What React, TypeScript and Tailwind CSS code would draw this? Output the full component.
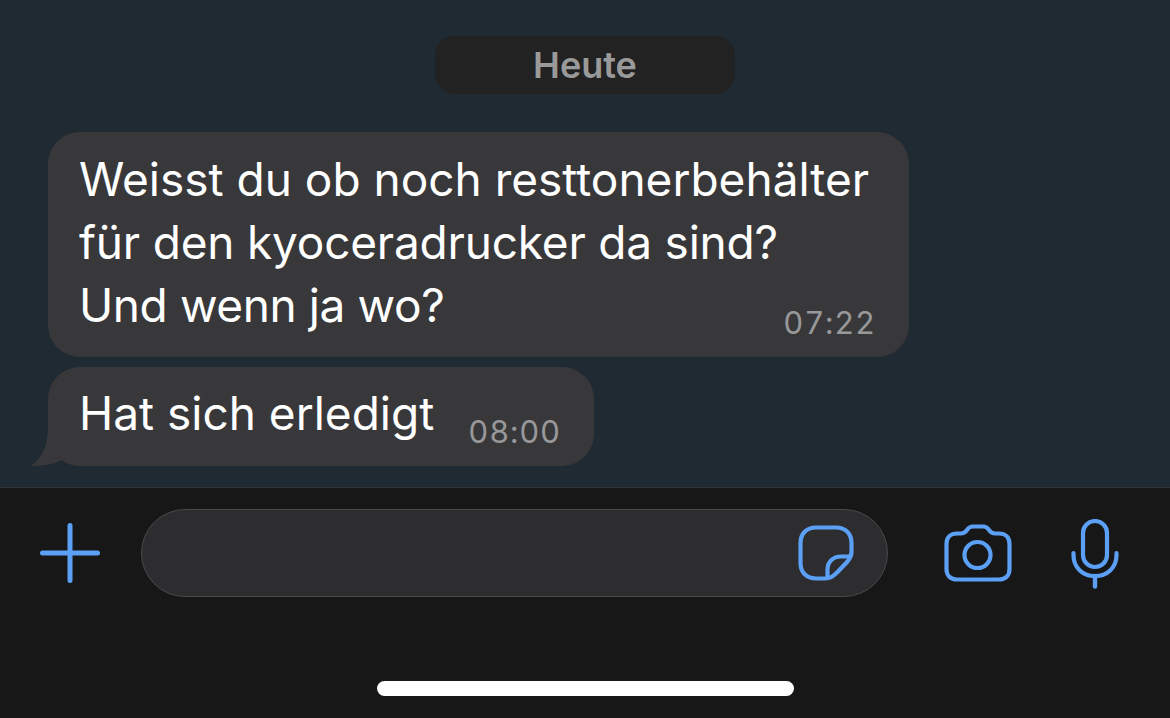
import React from "react";

const font = { fontFamily: "Inter, 'Noto Sans', sans-serif" };

const PlusIcon = () => (
	<svg width="60" height="60" viewBox="0 0 60 60" fill="none" stroke="#5ba0f5" strokeWidth="5" strokeLinecap="round">
		<path d="M30 2.5V57.5M2.5 30H57.5" />
	</svg>
);

const StickerIcon = () => (
	<svg width="56" height="56" viewBox="0 0 56 56" fill="none" stroke="#5ba0f5" strokeWidth="4.2" strokeLinejoin="round">
		<path d="M18 2.5H38C47.5 2.5 53.5 8.5 53.5 18V27C53.5 31 52 33.5 49.5 36.5L40 46.5C35.5 51 32.5 53.5 27 53.5H18C8.5 53.5 2.5 47.5 2.5 38V18C2.5 8.5 8.5 2.5 18 2.5Z" />
		<path d="M52 31.5H43C35 31.5 29.5 37 29.5 44.5V53.2" />
	</svg>
);

const CameraIcon = () => (
	<svg width="68" height="58" viewBox="0 0 68 58" fill="none" stroke="#5ba0f5" strokeWidth="4.2" strokeLinejoin="round">
		<path d="M13 9.5H17C20 9.5 21.5 8 23 6C24.5 3.5 26.5 2.5 29 2.5H39C41.5 2.5 43.5 3.5 45 6C46.5 8 48 9.5 51 9.5H55C61.5 9.5 65.5 13.5 65.5 20V45C65.5 51.5 61.5 55.5 55 55.5H13C6.5 55.5 2.5 51.5 2.5 45V20C2.5 13.5 6.5 9.5 13 9.5Z" />
		<circle cx="33.5" cy="31" r="13" />
	</svg>
);

const MicIcon = () => (
	<svg width="48" height="70" viewBox="0 0 48 70" fill="none" stroke="#5ba0f5" strokeLinecap="round">
		<rect x="12" y="2" width="24" height="46" rx="12" strokeWidth="4.2" />
		<path d="M2.5 34V36C2.5 48.5 11.5 57 24 57C36.5 57 45.5 48.5 45.5 36V34" strokeWidth="4.2" />
		<path d="M24 57V67.5" strokeWidth="4.4" />
	</svg>
);

const BubbleTail = () => (
	<svg className="absolute bottom-0 left-[-17px]" width="50" height="40" viewBox="0 0 50 40" fill="#38383a">
		<path d="M17 0C17 18 13 30 0 40C12 40 25 38 32 33C36 38 42 40 50 40V0Z" />
	</svg>
);

export default function App() {
	return (
		<div className="flex h-[718px] w-[1170px] flex-col overflow-hidden bg-[#171718]" style={font}>
			{/* chat area */}
			<div className="flex h-[488px] flex-col border-b border-[#333436] bg-[#1f2a33] pl-12 pt-9">
				<div className="-ml-12 flex h-[58px] w-[300px] items-center justify-center self-center rounded-[20px] bg-[#222222] text-[36px] font-semibold text-[#9a9a9a]">
					Heute
				</div>

				<div className="mt-[38px] flex h-[225px] w-[861px] items-end justify-between rounded-[32px] bg-[#38383a] pb-[15px] pl-[31px] pr-[33px]">
					<p className="mt-[10px] w-[700px] self-center whitespace-nowrap text-[46px] leading-[63px] text-white">
						<span className="block">Weisst du ob noch resttonerbehälter</span>
						<span className="block tracking-[-0.2px]">für den kyoceradrucker da sind?</span>
						<span className="block tracking-[-0.4px]">Und wenn ja wo?</span>
					</p>
					<span className="text-[31px] leading-[38px] tracking-[0.8px] text-[#98989b] tabular-nums">07:22</span>
				</div>

				<div className="relative mt-[10px] flex h-[99px] w-[546px] items-end justify-between rounded-[32px] bg-[#38383a] pb-[15px] pl-[31px] pr-[33px]">
					<BubbleTail />
					<p className="relative mt-[8px] self-center whitespace-nowrap text-[46px] leading-[63px] text-white">
						Hat sich erledigt
					</p>
					<span className="relative text-[31px] leading-[38px] tracking-[0.8px] text-[#98989b] tabular-nums">08:00</span>
				</div>
			</div>

			{/* input bar */}
			<div className="flex items-center pl-10 pt-[21px]">
				<PlusIcon />
				<div className="ml-[41px] flex h-[88px] w-[747px] items-center justify-end rounded-[44px] border border-[#4a4a4c] bg-[#2d2d2f] pr-[33px]">
					<StickerIcon />
				</div>
				<div className="ml-[56px]">
					<CameraIcon />
				</div>
				<div className="ml-[59px] mt-[2px]">
					<MicIcon />
				</div>
			</div>

			{/* home indicator */}
			<div className="mt-[84px] h-[15px] w-[417px] self-center rounded-full bg-white" />
		</div>
	);
}
